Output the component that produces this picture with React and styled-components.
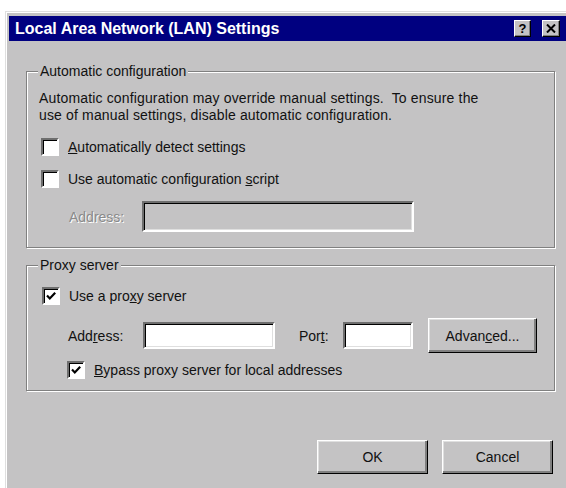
import styled, { createGlobalStyle } from 'styled-components';

const GlobalStyle = createGlobalStyle`
  html, body {
    margin: 0;
    padding: 0;
    background: #fff;
    overflow: hidden;
  }
  body {
    font-family: 'Liberation Sans', Arial, sans-serif;
    font-size: 14px;
    color: #111;
  }
`;

const Window = styled.div`
  box-sizing: border-box;
  width: 570px;
  height: 500px;
  margin: 11px 0 0 5px;
  padding: 4px 3px 0 3px;
  background: #c4c3c4;
  border: 1px solid;
  border-color: #dfdfdf #000 #000 #dfdfdf;
  box-shadow: inset 1px 1px #fff, inset -1px -1px #808080;
`;

const TitleBar = styled.div`
  height: 25px;
  display: flex;
  align-items: center;
  justify-content: space-between;
  padding: 0 11px 0 6px;
  background: #000080;
`;

const Title = styled.span`
  color: #fff;
  font-weight: bold;
  font-size: 16px;
`;

const TitleButtons = styled.div`
  display: flex;
  gap: 11px;
`;

const TitleButton = styled.span`
  box-sizing: border-box;
  width: ${p => p.$w}px;
  height: 17px;
  display: flex;
  align-items: center;
  justify-content: center;
  background: #c4c3c4;
  border: 1px solid;
  border-color: #fff #000 #000 #fff;
  box-shadow: inset -1px -1px #808080;
  font-weight: bold;
  font-size: 13px;
  color: #000;
  line-height: 1;
`;

const Body = styled.div`
  padding: 30px 16px 0 17px;
`;

const Group = styled.div`
  position: relative;
  margin-top: ${p => p.$top || 0}px;
  padding: ${p => p.$padTop}px 12px ${p => p.$padBottom}px 12px;
  border: 1px solid #808080;
  box-shadow: inset 1px 1px #fff, 1px 1px #fff;
`;

const Legend = styled.span`
  position: absolute;
  top: -9px;
  left: 11px;
  padding: 0 2px;
  line-height: 16px;
  background: #c4c3c4;
`;

const Note = styled.p`
  margin: 0;
  line-height: 17px;
  white-space: pre;
  letter-spacing: 0.15px;
`;

const Row = styled.div`
  display: flex;
  align-items: center;
  height: ${p => p.$h || 18}px;
  margin-top: ${p => p.$top || 0}px;
  padding-left: ${p => p.$indent || 0}px;
`;

const Box = styled.span`
  box-sizing: border-box;
  width: 18px;
  height: 18px;
  flex: none;
  display: flex;
  align-items: center;
  justify-content: center;
  background: #fff;
  border: 2px solid;
  border-color: #6e6e6e #fff #fff #6e6e6e;
  box-shadow: inset 1px 1px #000;
`;

const BoxText = styled.span`
  margin-left: 9px;
`;

const Key = styled.span`
  text-decoration: underline;
`;

const FieldLabel = styled.span`
  flex: none;
  width: ${p => p.$w}px;
  margin-left: ${p => p.$left || 0}px;
  color: ${p => (p.$disabled ? '#8a8a8a' : 'inherit')};
  text-shadow: ${p => (p.$disabled ? '1px 1px #fff' : 'none')};
`;

const Field = styled.span`
  box-sizing: border-box;
  flex: none;
  width: ${p => p.$w}px;
  height: ${p => p.$h}px;
  background: ${p => (p.$disabled ? '#c4c3c4' : '#fff')};
  border: 2px solid;
  border-color: #6e6e6e #fff #fff #6e6e6e;
  box-shadow: inset 1px 1px #000, inset -1px -1px #dfdfdf;
`;

const Button = styled.button`
  box-sizing: border-box;
  flex: none;
  width: ${p => p.$w}px;
  height: ${p => p.$h}px;
  margin-left: ${p => p.$left || 0}px;
  padding: 0;
  font: inherit;
  color: #111;
  background: #c4c3c4;
  border: 1px solid;
  border-color: #fff #000 #000 #fff;
  box-shadow: inset -2px -2px #808080, inset 1px 1px #dfdfdf;
`;

const Actions = styled.div`
  display: flex;
  justify-content: flex-end;
  gap: 14px;
  margin: 49px 2px 0 0;
`;

const Check = ({ checked }) => (
  <Box>
    {checked && (
      <svg width="12" height="12" viewBox="0 0 12 12">
        <path d="M2 5.5 L4.8 8.4 L10.2 2.8" fill="none" stroke="#000" strokeWidth="2.2" />
      </svg>
    )}
  </Box>
);

const CheckRow = ({ checked, indent, top, children }) => (
  <Row $indent={indent} $top={top}>
    <Check checked={checked} />
    <BoxText>{children}</BoxText>
  </Row>
);

export default function App() {
  return (
    <>
      <GlobalStyle />
      <Window>
        <TitleBar>
          <Title>Local Area Network (LAN) Settings</Title>
          <TitleButtons>
            <TitleButton $w={17}>?</TitleButton>
            <TitleButton $w={18}>
              <svg width="10" height="9" viewBox="0 0 10 9">
                <path d="M1 0.5 L9 8.5 M9 0.5 L1 8.5" stroke="#000" strokeWidth="2" />
              </svg>
            </TitleButton>
          </TitleButtons>
        </TitleBar>

        <Body>
          <Group $padTop={18} $padBottom={15}>
            <Legend>Automatic configuration</Legend>
            <Note>
              {'Automatic configuration may override manual settings.  To ensure the'}
              <br />
              {'use of manual settings, disable automatic configuration.'}
            </Note>
            <CheckRow indent={2} top={14}>
              <Key>A</Key>utomatically detect settings
            </CheckRow>
            <CheckRow indent={2} top={14}>
              Use automatic configuration <Key>s</Key>cript
            </CheckRow>
            <Row $h={31} $top={13} $indent={30}>
              <FieldLabel $w={73} $disabled>Address:</FieldLabel>
              <Field $w={272} $h={31} $disabled />
            </Row>
          </Group>

          <Group $top={17} $padTop={21} $padBottom={11}>
            <Legend>Proxy server</Legend>
            <CheckRow checked indent={3}>
              Use a pro<Key>x</Key>y server
            </CheckRow>
            <Row $h={35} $top={13} $indent={29}>
              <FieldLabel $w={75}>
                Add<Key>r</Key>ess:
              </FieldLabel>
              <Field $w={132} $h={27} />
              <FieldLabel $w={44} $left={24}>
                Por<Key>t</Key>:
              </FieldLabel>
              <Field $w={70} $h={27} />
              <Button $w={109} $h={35} $left={15}>
                Advan<Key>c</Key>ed...
              </Button>
            </Row>
            <CheckRow checked indent={28} top={8}>
              <Key>B</Key>ypass proxy server for local addresses
            </CheckRow>
          </Group>

          <Actions>
            <Button $w={111} $h={34}>OK</Button>
            <Button $w={111} $h={34}>Cancel</Button>
          </Actions>
        </Body>
      </Window>
    </>
  );
}
